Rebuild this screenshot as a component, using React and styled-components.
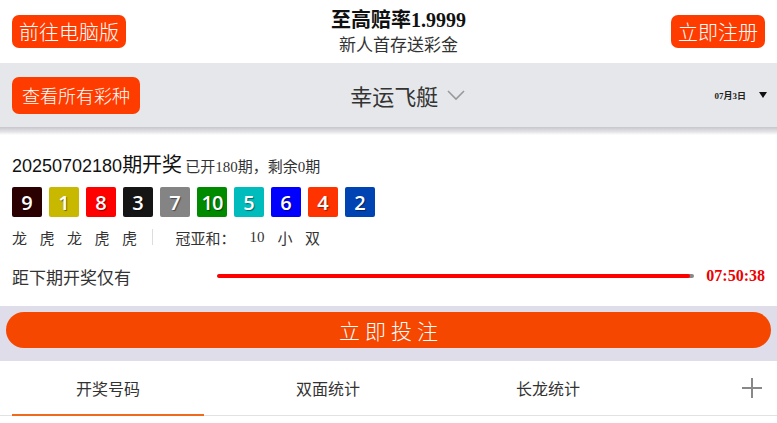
import React from "react";
import styled, { createGlobalStyle } from "styled-components";

const GlobalStyle = createGlobalStyle`
  html, body {
    margin: 0;
    padding: 0;
    background: #fff;
  }
  body {
    font-family: "Liberation Sans", "Noto Sans CJK SC", sans-serif;
    color: #333;
  }
`;

const CJK = `"Noto Sans CJK SC", sans-serif`;
const SERIF_CJK = `"Liberation Serif", "Noto Sans CJK SC", serif`;

const Page = styled.div`
  width: 777px;
  overflow: hidden;
`;

// HEADER

const TopBar = styled.header`
  display: flex;
  align-items: center;
  justify-content: space-between;
  height: 63px;
  padding: 0 12px;
  box-sizing: border-box;
`;

const OrangeButton = styled.div`
  display: flex;
  align-items: center;
  justify-content: center;
  height: ${({ $h }) => $h || 33}px;
  padding: 0 ${({ $px }) => $px || 7}px;
  border-radius: 7px;
  background: #ff3c00;
  color: #fff;
  font-family: ${CJK};
  font-weight: 300;
  font-size: ${({ $size }) => $size || 20}px;
  line-height: 1;
  box-sizing: border-box;
`;

const Promo = styled.div`
  display: flex;
  flex-direction: column;
  align-items: center;
  margin-top: -1px;

  .title {
    font-family: ${SERIF_CJK};
    font-weight: bold;
    font-size: 20px;
    line-height: 26px;
    color: #111;
  }

  .sub {
    font-family: ${CJK};
    font-size: 17px;
    line-height: 22px;
    color: #333;
  }
`;

const LotteryBar = styled.div`
  display: flex;
  align-items: center;
  height: 64px;
  padding: 0 10px 0 12px;
  background: #e6e7ea;
  box-sizing: border-box;
`;

const BarShadow = styled.div`
  height: 8px;
  background: linear-gradient(#c6c6cc, #e4e4e8 60%, #fff);
`;

const GameName = styled.div`
  flex: 1;
  display: flex;
  align-items: center;
  justify-content: center;
  gap: 8px;
  margin-right: 38px;
  font-family: ${CJK};
  font-size: 22px;
  color: #333;
`;

const DatePick = styled.div`
  display: flex;
  align-items: center;
  gap: 13px;
  font-family: ${SERIF_CJK};
  font-weight: bold;
  font-size: 9px;
  color: #222;
`;

const Triangle = styled.span`
  width: 0;
  height: 0;
  border-left: 4.5px solid transparent;
  border-right: 4.5px solid transparent;
  border-top: 6px solid #111;
`;

// RESULT

const Result = styled.section`
  padding: 14px 12px 0;
`;

const Issue = styled.div`
  display: flex;
  align-items: baseline;
  gap: 3px;
  height: 32px;

  .no {
    font-family: "Liberation Sans", "Noto Sans CJK SC", sans-serif;
    font-size: 18px;
    color: #111;
  }

  .no b {
    font-family: ${CJK};
    font-weight: 400;
    font-size: 20px;
  }

  .meta {
    font-family: ${SERIF_CJK};
    font-size: 15px;
    color: #333;
  }
`;

const Balls = styled.div`
  display: flex;
  gap: 7px;
  margin-top: 6px;
`;

const Ball = styled.div`
  width: 30px;
  height: 30px;
  border-radius: 2px;
  display: flex;
  align-items: center;
  justify-content: center;
  background: ${({ $bg }) => $bg};
  color: #fff;
  font-family: "Open Sans", sans-serif;
  font-size: 20px;
  font-weight: 600;
  letter-spacing: ${({ $tight }) => ($tight ? "-1px" : "0")};
  text-shadow: 1px 1px 1px rgba(0, 0, 0, 0.45);
`;

const Stats = styled.div`
  display: flex;
  align-items: center;
  height: 40px;
  font-family: ${CJK};
  font-size: 15px;
  color: #333;

  span {
    width: 27.5px;
  }

  .sep {
    width: 1px;
    height: 16px;
    background: #ddd;
    margin: 0 23px 0 2px;
  }

  .label {
    width: auto;
    margin-right: 14px;
  }

  .num {
    font-family: "Liberation Serif", serif;
    width: 28px;
  }
`;

const Countdown = styled.div`
  display: flex;
  align-items: center;
  height: 38px;

  .label {
    width: 205px;
    font-family: ${CJK};
    font-size: 17px;
    color: #333;
  }

  .time {
    margin-left: 12px;
    font-family: "Liberation Serif", serif;
    font-weight: bold;
    font-size: 16px;
    color: #ee0000;
  }
`;

const Progress = styled.div`
  flex: 1;
  height: 4px;
  border-radius: 2px;
  background: #888;
  overflow: hidden;
`;

const ProgressFill = styled.div`
  height: 100%;
  border-radius: 2px;
  background: #ff0000;
`;

// BET

const BetBand = styled.div`
  margin-top: 11px;
  padding: 6px 6px 13px;
  background: #dfdde9;
`;

const BetButton = styled.div`
  height: 36px;
  border-radius: 18px;
  background: #f54700;
  display: flex;
  align-items: center;
  justify-content: center;
  color: #fff;
  font-family: ${CJK};
  font-weight: 300;
  font-size: 21px;
  letter-spacing: 5px;
  text-indent: 5px;
`;

// TABS

const Tabs = styled.nav`
  display: flex;
  align-items: stretch;
  height: 55px;
  border-bottom: 1px solid #e2e2e2;
  box-sizing: border-box;
`;

const Tab = styled.div`
  position: relative;
  width: 220px;
  margin-left: ${({ $first }) => ($first ? "-2px" : "0")};
  display: flex;
  align-items: center;
  justify-content: center;
  font-family: ${CJK};
  font-size: 16px;
  color: #333;

  &::after {
    content: "";
    display: ${({ $active }) => ($active ? "block" : "none")};
    position: absolute;
    left: 14px;
    right: 14px;
    bottom: -1px;
    height: 2px;
    background: #f06a1e;
  }
`;

const Plus = styled.div`
  flex: 1;
  display: flex;
  align-items: center;
  justify-content: flex-end;
  padding-right: 14px;
`;

const balls = [
  { n: 9, bg: "#2b0000" },
  { n: 1, bg: "#c9b800" },
  { n: 8, bg: "#ff0000" },
  { n: 3, bg: "#151515" },
  { n: 7, bg: "#848484" },
  { n: 10, bg: "#008a00" },
  { n: 5, bg: "#00bcbc" },
  { n: 6, bg: "#0000ff" },
  { n: 4, bg: "#ff3300" },
  { n: 2, bg: "#0044b4" },
];

const dragonTiger = ["龙", "虎", "龙", "虎", "虎"];

export default function App() {
  return (
    <Page>
      <GlobalStyle />
      <TopBar>
        <OrangeButton>前往电脑版</OrangeButton>
        <Promo>
          <div className="title">至高赔率1.9999</div>
          <div className="sub">新人首存送彩金</div>
        </Promo>
        <OrangeButton>立即注册</OrangeButton>
      </TopBar>

      <LotteryBar>
        <OrangeButton $h={37} $px={10} $size={18}>
          查看所有彩种
        </OrangeButton>
        <GameName>
          幸运飞艇
          <svg width="20" height="12" viewBox="0 0 20 12">
            <path d="M2 2 L10 10 L18 2" fill="none" stroke="#999" strokeWidth="1.6" />
          </svg>
        </GameName>
        <DatePick>
          07月3日
          <Triangle />
        </DatePick>
      </LotteryBar>
      <BarShadow />

      <Result>
        <Issue>
          <span className="no">
            20250702180<b>期开奖</b>
          </span>
          <span className="meta">已开180期，剩余0期</span>
        </Issue>
        <Balls>
          {balls.map((b) => (
            <Ball key={b.n} $bg={b.bg} $tight={b.n > 9}>
              {b.n}
            </Ball>
          ))}
        </Balls>
        <Stats>
          {dragonTiger.map((t, i) => (
            <span key={i}>{t}</span>
          ))}
          <i className="sep" />
          <span className="label">冠亚和：</span>
          <span className="num">10</span>
          <span>小</span>
          <span>双</span>
        </Stats>
        <Countdown>
          <span className="label">距下期开奖仅有</span>
          <Progress>
            <ProgressFill style={{ width: "99%" }} />
          </Progress>
          <span className="time">07:50:38</span>
        </Countdown>
      </Result>

      <BetBand>
        <BetButton>立即投注</BetButton>
      </BetBand>

      <Tabs>
        <Tab $active $first>
          开奖号码
        </Tab>
        <Tab>双面统计</Tab>
        <Tab>长龙统计</Tab>
        <Plus>
          <svg width="22" height="22" viewBox="0 0 22 22">
            <path d="M11 1 V21 M1 11 H21" stroke="#888" strokeWidth="2" />
          </svg>
        </Plus>
      </Tabs>
    </Page>
  );
}
